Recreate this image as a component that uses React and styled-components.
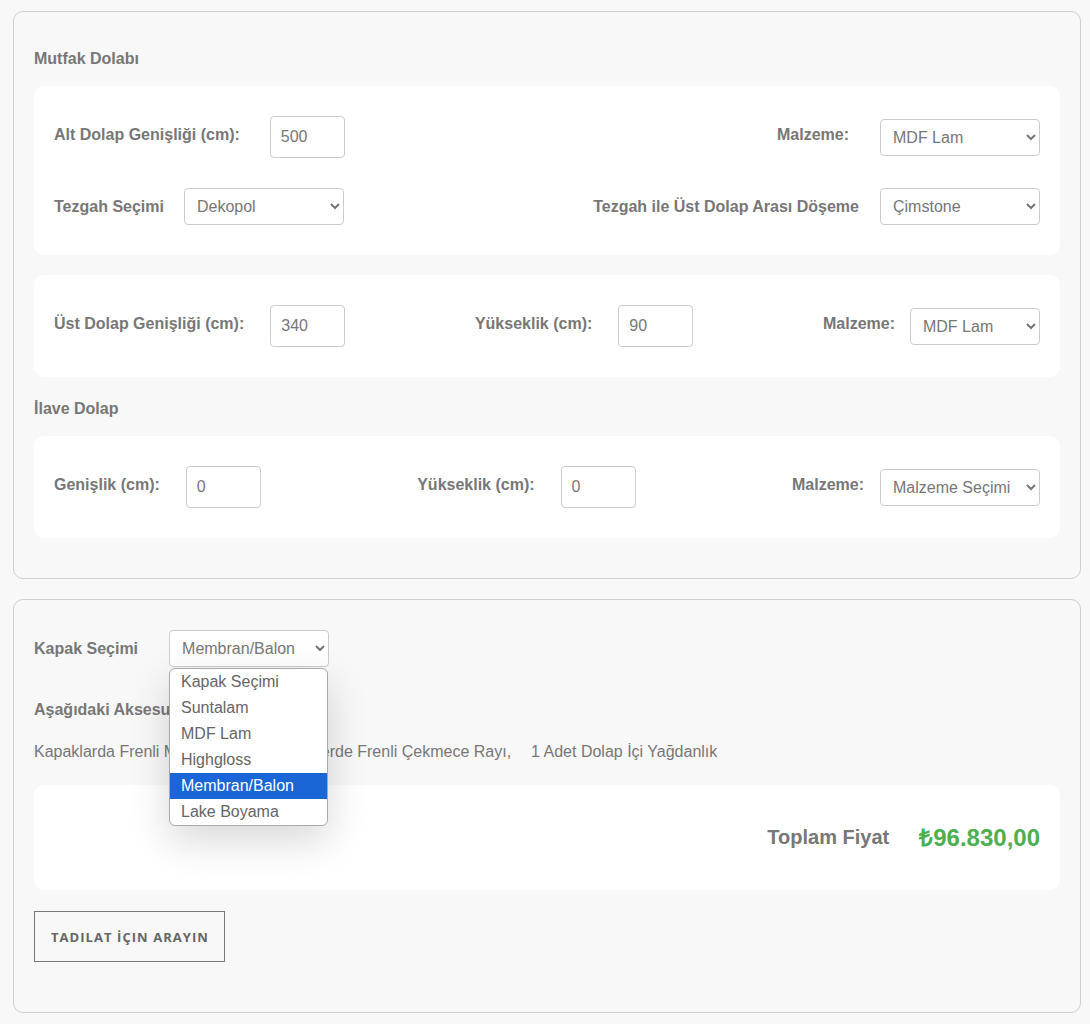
import React from "react";
import styled, { createGlobalStyle } from "styled-components";

const Global = createGlobalStyle`
  html, body { margin: 0; padding: 0; background: #f8f8f8; }
  body { font-family: "Liberation Sans", Arial, sans-serif; color: #777; }
  * { box-sizing: border-box; }
`;

const Page = styled.div`
  padding: 11px 9px 10px 13px;
`;

const Panel = styled.section`
  background: #f8f8f8;
  border: 1px solid #cfcfcf;
  border-radius: 10px;
  padding: 30px 20px 20px;
  margin-bottom: 20px;
  &:last-child { margin-bottom: 0; }
`;

const Heading = styled.h4`
  margin: 5px 0 15px;
  font-size: 16px;
  line-height: 24px;
  font-weight: 700;
  color: #777;
`;

const Card = styled.div`
  background: #fff;
  border-radius: 10px;
  padding: ${(p) => (p.$tall ? "40px 20px" : "30px 20px")};
  margin-bottom: 20px;
  display: flex;
  flex-direction: column;
  gap: 30px;
`;

const Row = styled.div`
  display: flex;
  align-items: center;
  justify-content: ${(p) => p.$justify || "space-between"};
  gap: ${(p) => p.$gap || 0}px;
  margin-bottom: ${(p) => p.$mb || 0}px;
`;

const Field = styled.div`
  display: flex;
  align-items: center;
  gap: ${(p) => p.$gap}px;
  position: relative;
`;

const Label = styled.label`
  font-size: 16px;
  font-weight: 700;
  color: #777;
  line-height: 18px;
  margin-bottom: ${(p) => (p.$lift ? 5 : 0)}px;
  white-space: nowrap;
`;

const NumberInput = styled.input`
  width: 75px;
  height: 42px;
  padding: 0 10px;
  border: 1px solid #ccc;
  border-radius: 4px;
  font-family: "Liberation Sans", Arial, sans-serif;
  font-size: 16px;
  color: #777;
  background: #fff;
  outline: none;
`;

const Select = styled.select`
  width: ${(p) => p.$w || 160}px;
  height: 37px;
  padding: 0 8px;
  border: 1px solid #ccc;
  border-radius: 4px;
  font-family: "Liberation Sans", Arial, sans-serif;
  font-size: 16px;
  color: #777;
  background: #fff;
  outline: none;
`;

const Menu = styled.ul`
  position: absolute;
  top: 38px;
  width: 159px;
  margin: 0;
  padding: 0;
  list-style: none;
  background: #fff;
  border: 1px solid #a9a9a9;
  border-radius: 6px;
  overflow: hidden;
  box-shadow: 0 14px 40px rgba(0, 0, 0, 0.16);
  z-index: 10;
`;

const Option = styled.li`
  height: 26px;
  line-height: 26px;
  padding: 0 11px;
  font-size: 16px;
  color: ${(p) => (p.$active ? "#fff" : "#666")};
  background: ${(p) => (p.$active ? "#1b66d6" : "transparent")};
`;

const Accessories = styled.div`
  display: flex;
  gap: 20px;
  font-size: 16px;
  line-height: 30px;
  color: #777;
  margin-bottom: 18px;
`;

const TotalLabel = styled.span`
  font-size: 20px;
  line-height: 25px;
  font-weight: 700;
  color: #777;
`;

const Price = styled.span`
  font-size: 24px;
  line-height: 25px;
  font-weight: 700;
  color: #4caf50;
`;

const CallButton = styled.button`
  display: inline-flex;
  align-items: center;
  justify-content: center;
  height: 51px;
  padding: 0 15px 0 16px;
  margin: 1px 0 30px;
  background: transparent;
  border: 1px solid #7a7a7a;
  border-radius: 0;
  font-family: "Open Sans", sans-serif;
  font-size: 13px;
  font-weight: 700;
  letter-spacing: 1.05px;
  color: #666;
  text-transform: uppercase;
`;

const kapakOptions = ["Kapak Seçimi", "Suntalam", "MDF Lam", "Highgloss", "Membran/Balon", "Lake Boyama"];

export default function App() {
  return (
    <>
      <Global />
      <Page>
        <Panel>
          <Heading>Mutfak Dolabı</Heading>
          <Card>
            <Row>
              <Field $gap={30}>
                <Label $lift>Alt Dolap Genişliği (cm):</Label>
                <NumberInput type="text" defaultValue="500" />
              </Field>
              <Field $gap={31}>
                <Label $lift>Malzeme:</Label>
                <Select defaultValue="MDF Lam">
                  <option>Malzeme Seçimi</option>
                  <option>MDF Lam</option>
                </Select>
              </Field>
            </Row>
            <Row>
              <Field $gap={20}>
                <Label>Tezgah Seçimi</Label>
                <Select defaultValue="Dekopol">
                  <option>Dekopol</option>
                </Select>
              </Field>
              <Field $gap={21}>
                <Label>Tezgah ile Üst Dolap Arası Döşeme</Label>
                <Select defaultValue="Çimstone">
                  <option>Çimstone</option>
                </Select>
              </Field>
            </Row>
          </Card>
          <Card>
            <Row>
              <Field $gap={26}>
                <Label $lift>Üst Dolap Genişliği (cm):</Label>
                <NumberInput type="text" defaultValue="340" />
              </Field>
              <Field $gap={26}>
                <Label $lift>Yükseklik (cm):</Label>
                <NumberInput type="text" defaultValue="90" />
              </Field>
              <Field $gap={15}>
                <Label $lift>Malzeme:</Label>
                <Select $w={130} defaultValue="MDF Lam">
                  <option>Malzeme Seçimi</option>
                  <option>MDF Lam</option>
                </Select>
              </Field>
            </Row>
          </Card>
          <Heading>İlave Dolap</Heading>
          <Card>
            <Row>
              <Field $gap={26}>
                <Label $lift>Genişlik (cm):</Label>
                <NumberInput type="text" defaultValue="0" />
              </Field>
              <Field $gap={26}>
                <Label $lift>Yükseklik (cm):</Label>
                <NumberInput type="text" defaultValue="0" />
              </Field>
              <Field $gap={16}>
                <Label $lift>Malzeme:</Label>
                <Select defaultValue="Malzeme Seçimi">
                  <option>Malzeme Seçimi</option>
                  <option>MDF Lam</option>
                </Select>
              </Field>
            </Row>
          </Card>
        </Panel>

        <Panel>
          <Row $justify="flex-start" $mb={31}>
            <Field $gap={31}>
              <Label>Kapak Seçimi</Label>
              <Select defaultValue="Membran/Balon">
                {kapakOptions.map((o) => (
                  <option key={o}>{o}</option>
                ))}
              </Select>
              <Menu style={{ left: 135 }}>
                {kapakOptions.map((o) => (
                  <Option key={o} $active={o === "Membran/Balon"}>
                    {o}
                  </Option>
                ))}
              </Menu>
            </Field>
          </Row>
          <Heading>Aşağıdaki Aksesuarlar Dahildir:</Heading>
          <Accessories>
            <span>Kapaklarda Frenli Menteşe,</span>
            <span>Çekmecelerde Frenli Çekmece Rayı,</span>
            <span>1 Adet Dolap İçi Yağdanlık</span>
          </Accessories>
          <Card $tall>
            <Row $justify="flex-end" $gap={30}>
              <TotalLabel>Toplam Fiyat</TotalLabel>
              <Price>₺96.830,00</Price>
            </Row>
          </Card>
          <CallButton>Tadilat İçin Arayın</CallButton>
        </Panel>
      </Page>
    </>
  );
}
